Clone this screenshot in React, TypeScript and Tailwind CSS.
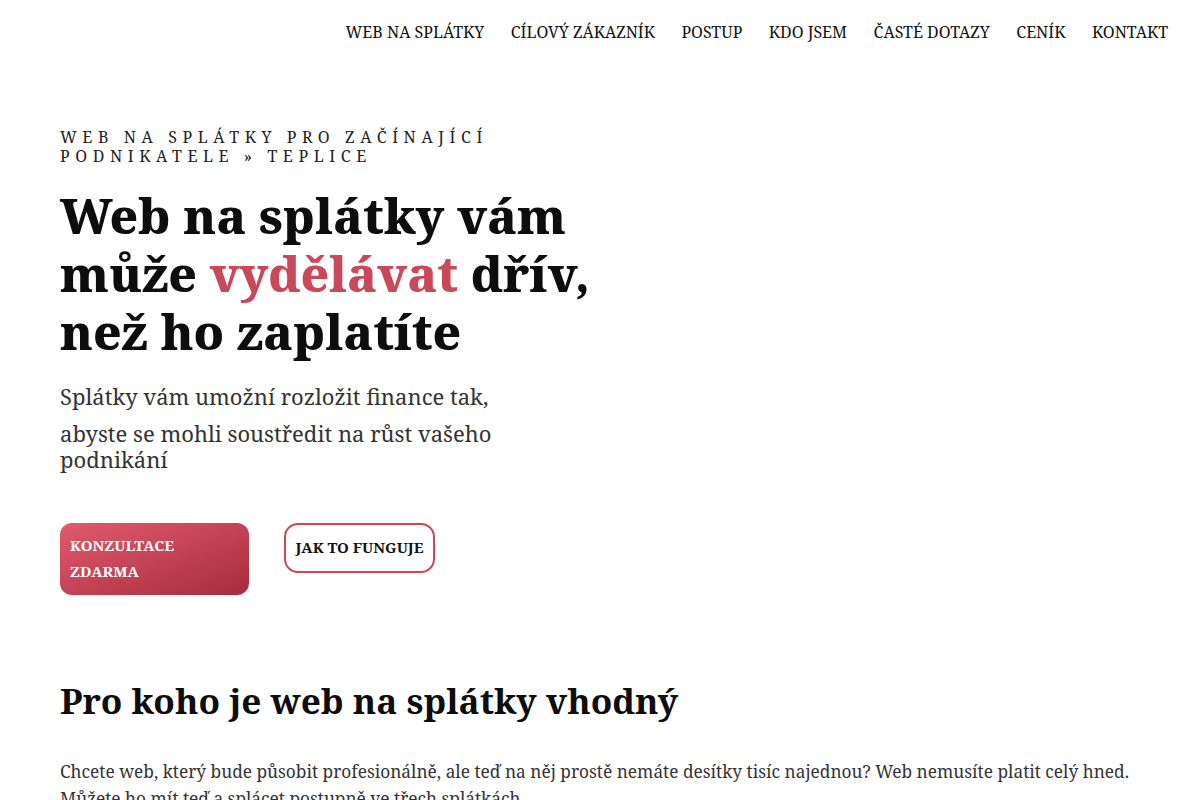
const navItems = [
  "Web na splátky",
  "Cílový zákazník",
  "Postup",
  "Kdo jsem",
  "Časté dotazy",
  "Ceník",
  "Kontakt",
];

export default function App() {
  return (
    <div
      className="min-h-screen bg-white text-[#111]"
      style={{ fontFamily: '"Noto Serif", "DejaVu Serif", "Liberation Serif", serif' }}
    >
      {/* Header */}
      <header className="flex justify-end px-8 pt-[20px]">
        <nav className="flex gap-[26.5px] text-[16px] uppercase text-[#111]">
          {navItems.map((item) => (
            <a key={item} href="#" className="leading-6">
              {item}
            </a>
          ))}
        </nav>
      </header>

      {/* Hero */}
      <section className="px-[60px] pt-[84px]">
        <p className="w-[560px] text-[16px] leading-[19px] tracking-[0.35em] uppercase text-[#222]">
          Web na splátky pro začínající podnikatele » Teplice
        </p>
        <h1 className="mt-[20px] w-[560px] text-[48.8px] font-extrabold leading-[58px] text-[#0d0d0d]">
          Web na splátky vám může <span className="text-[#c9485a]">vydělávat</span> dřív, než ho
          zaplatíte
        </h1>
        <div className="mt-[23px] w-[460px] text-[22px] leading-[26px] text-[#333]">
          <p>Splátky vám umožní rozložit finance tak,</p>
          <p className="mt-[11px]">abyste se mohli soustředit na růst vašeho podnikání</p>
        </div>

        <div className="mt-[51px] flex items-start gap-[35px]">
          <a
            href="#"
            className="flex h-[72px] w-[189px] items-center rounded-[12px] bg-gradient-to-br from-[#e05b6c] to-[#a82a3e] px-[10px] pb-[2px] text-[15px] font-bold uppercase leading-[26px] text-white"
          >
            Konzultace zdarma
          </a>
          <a
            href="#"
            className="flex h-[50px] w-[151px] items-center justify-center rounded-[14px] border-2 border-[#c9485a] pb-[2px] text-[15px] font-bold uppercase text-[#111]"
          >
            Jak to funguje
          </a>
        </div>
      </section>

      {/* Pro koho */}
      <section className="px-[60px] pt-[83px]">
        <h2 className="text-[35.2px] font-bold leading-[44px] text-[#0d0d0d]">
          Pro koho je web na splátky vhodný
        </h2>
        <p className="mt-[36px] text-[17.3px] leading-[27px] text-[#333]">
          Chcete web, který bude působit profesionálně, ale teď na něj prostě nemáte desítky tisíc
          najednou? Web nemusíte platit celý hned. Můžete ho mít teď a splácet postupně ve třech
          splátkách.
        </p>
      </section>
    </div>
  );
}
